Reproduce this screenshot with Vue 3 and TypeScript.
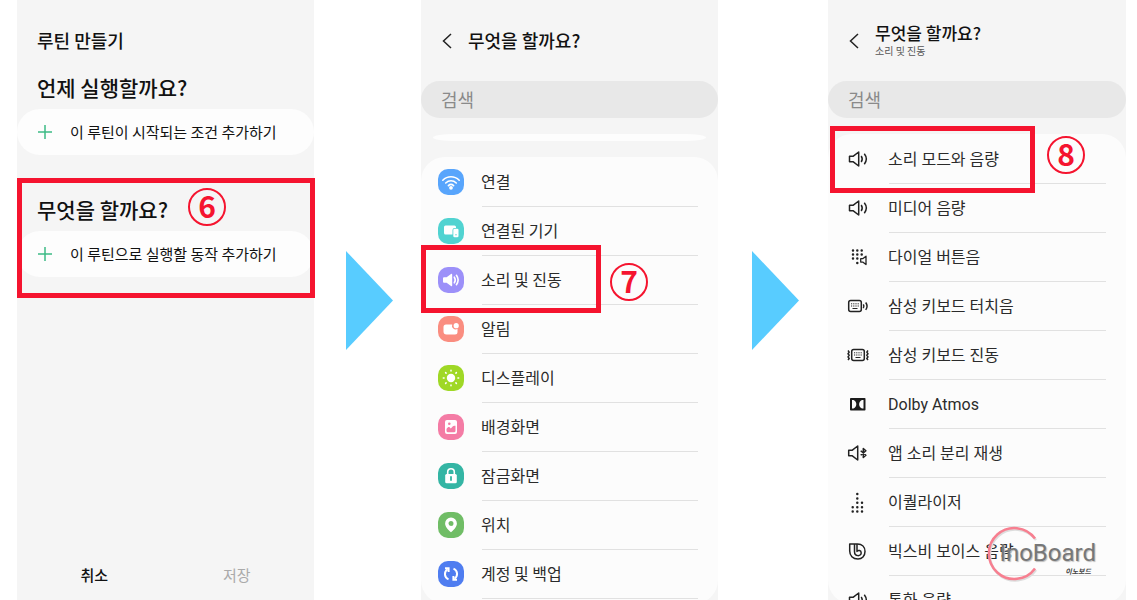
<script setup lang="ts">
interface Row {
  icon: string
  label: string
}

const categories: Row[] = [
  { icon: 'wifi', label: '연결' },
  { icon: 'devices', label: '연결된 기기' },
  { icon: 'sound', label: '소리 및 진동' },
  { icon: 'alert', label: '알림' },
  { icon: 'display', label: '디스플레이' },
  { icon: 'wallpaper', label: '배경화면' },
  { icon: 'lock', label: '잠금화면' },
  { icon: 'pin', label: '위치' },
  { icon: 'sync', label: '계정 및 백업' },
]

const soundActions: Row[] = [
  { icon: 'volume', label: '소리 모드와 음량' },
  { icon: 'volume', label: '미디어 음량' },
  { icon: 'dial', label: '다이얼 버튼음' },
  { icon: 'keysound', label: '삼성 키보드 터치음' },
  { icon: 'keyvibrate', label: '삼성 키보드 진동' },
  { icon: 'dolby', label: 'Dolby Atmos' },
  { icon: 'bluetooth', label: '앱 소리 분리 재생' },
  { icon: 'equalizer', label: '이퀄라이저' },
  { icon: 'bixby', label: '빅스비 보이스 음량' },
  { icon: 'volume', label: '통화 음량' },
]
</script>

<template>
  <main class="guide">
    <section class="phone">
      <h1 class="title">루틴 만들기</h1>
      <div class="group">
        <h2>언제 실행할까요?</h2>
        <button class="add" type="button">
          <svg viewBox="0 0 14 14" aria-hidden="true"><path d="M7 0v14M0 7h14" /></svg>
          <span class="label">이 루틴이 시작되는 조건 추가하기</span>
        </button>
      </div>
      <div class="group group-second">
        <h2>무엇을 할까요?</h2>
        <button class="add" type="button">
          <svg viewBox="0 0 14 14" aria-hidden="true"><path d="M7 0v14M0 7h14" /></svg>
          <span class="label">이 루틴으로 실행할 동작 추가하기</span>
        </button>
      </div>
      <footer class="actions">
        <button type="button">취소</button>
        <button type="button" class="muted">저장</button>
      </footer>
      <div class="frame frame-six"></div>
      <span class="step step-six">6</span>
    </section>

    <div class="arrow">
      <svg viewBox="0 0 47 99" aria-hidden="true"><path d="M0 0 47 49.500 0 99z" /></svg>
    </div>

    <section class="phone">
      <header class="bar">
        <button class="back" type="button" aria-label="뒤로">
          <svg viewBox="0 0 10 16" aria-hidden="true"><path d="M9 1 1.500 8 9 15" /></svg>
        </button>
        <h1 class="label">무엇을 할까요?</h1>
      </header>
      <input class="search" type="search" placeholder="검색" aria-label="검색" />
      <div class="sliver"></div>
      <ul class="list">
        <li v-for="row in categories" :key="row.label">
          <button class="row" type="button">
            <span class="badge" :class="row.icon">
              <svg viewBox="0 0 26 26" aria-hidden="true">
                <g v-if="row.icon === 'wifi'" class="line">
                  <path d="M4.800 11.200c4.700-4.600 11.700-4.600 16.400 0M7.700 14c3.100-3 7.500-3 10.600 0M10.400 16.600c1.600-1.500 3.600-1.500 5.200 0" />
                  <circle class="solid" cx="13" cy="18.800" r="1.100" />
                </g>
                <g v-else-if="row.icon === 'devices'">
                  <path d="M7.500 7.500h9a1.500 1.500 0 0 1 1.500 1.500v1h-1.500a2 2 0 0 0-2 2v4.500h-7A1.500 1.500 0 0 1 6 15V9a1.500 1.500 0 0 1 1.500-1.500z" />
                  <rect x="15.300" y="10.800" width="5.200" height="8.500" rx="1.300" />
                  <circle cx="18" cy="16.800" r=".7" fill="#51d3d1" />
                </g>
                <g v-else-if="row.icon === 'sound'">
                  <path d="M5 11.300q0-1 1-1h2.600L13 7q1.200-.7 1.200.7v10.600q0 1.400-1.200.7l-4.400-3.300H6q-1 0-1-1z" />
                  <path class="line" d="M16.300 10.200c1.200 1.700 1.200 3.900 0 5.600M18.400 8.300c2.100 2.900 2.100 6.500 0 9.400" />
                </g>
                <g v-else-if="row.icon === 'alert'">
                  <path d="M8 8.500h6.200a3.600 3.600 0 0 0 5.300 4.300v3.200a2.500 2.500 0 0 1-2.500 2.500H8.500A3 3 0 0 1 5.500 15.500V11A2.500 2.500 0 0 1 8 8.500z" />
                  <circle cx="18.200" cy="9.700" r="2.600" />
                </g>
                <g v-else-if="row.icon === 'display'">
                  <circle cx="13" cy="13" r="4.200" />
                  <path class="line dots" d="M13 5.300v.8M13 19.900v.8M5.300 13h.8M19.900 13h.8M7.600 7.600l.5.5M17.900 17.900l.5.5M7.600 18.400l.5-.5M17.900 8.100l.5-.5" />
                </g>
                <g v-else-if="row.icon === 'wallpaper'">
                  <rect x="7" y="6" width="12" height="14" rx="2" />
                  <path d="M8.500 15c2-3 3-2 4.300-.5 1.200-1 2.200-3.500 4.700-2.700v5q0 1.500-1.500 1.500h-6q-1.500 0-1.500-1.500z" fill="#f47ca5" />
                  <circle cx="11.300" cy="9.800" r="1.300" fill="#f47ca5" />
                </g>
                <g v-else-if="row.icon === 'lock'">
                  <path class="line" d="M9.700 12V9a3.300 3.300 0 0 1 6.600 0v3" />
                  <rect x="7.200" y="11" width="11.600" height="9.200" rx="1.500" />
                  <path d="M13 14v3" stroke="#34b5a4" stroke-width="1.800" stroke-linecap="round" />
                </g>
                <g v-else-if="row.icon === 'pin'">
                  <path fill-rule="evenodd" d="M13 5.500a5.900 5.900 0 0 0-5.900 5.900c0 4 4.600 7.400 5.900 8.900 1.300-1.500 5.900-4.900 5.900-8.900A5.900 5.900 0 0 0 13 5.500zm0 3.500a2.500 2.500 0 1 1 0 5 2.500 2.500 0 0 1 0-5z" />
                </g>
                <g v-else class="line thick">
                  <path d="M10.500 18.300C6.200 16.500 5.700 11 9.500 8.300M15.500 7.700c4.300 1.800 4.800 7.300 1 10" />
                  <path d="M7 7.300h3.600v3.600M19 18.700h-3.600v-3.600" />
                </g>
              </svg>
            </span>
            <span class="label">{{ row.label }}</span>
          </button>
        </li>
      </ul>
      <div class="frame frame-seven"></div>
      <span class="step step-seven">7</span>
    </section>

    <div class="arrow">
      <svg viewBox="0 0 47 99" aria-hidden="true"><path d="M0 0 47 49.500 0 99z" /></svg>
    </div>

    <section class="phone">
      <header class="bar">
        <button class="back" type="button" aria-label="뒤로">
          <svg viewBox="0 0 10 16" aria-hidden="true"><path d="M9 1 1.500 8 9 15" /></svg>
        </button>
        <div class="stacked">
          <h1>무엇을 할까요?</h1>
          <p>소리 및 진동</p>
        </div>
      </header>
      <input class="search" type="search" placeholder="검색" aria-label="검색" />
      <ul class="list">
        <li v-for="(row, i) in soundActions" :key="i">
          <button class="row" type="button">
            <svg class="glyph" viewBox="0 0 24 24" aria-hidden="true">
              <g v-if="row.icon === 'volume'">
                <path d="M3.500 9.300H7l5.700-4.300v14L7 14.700H3.500z" />
                <path d="M15.200 9c1.300 1.900 1.300 4.100 0 6M18.300 6.800c2.600 3.300 2.600 7.100 0 10.400" />
              </g>
              <g v-else-if="row.icon === 'dial'">
                <path class="dot" d="M7 5.500h0M11.300 5.500h0M15.700 5.500h0M7 9.500h0M11.300 9.500h0M15.700 9.500h0M7 13.500h0M11.300 13.500h0M11.300 18h0" />
                <path class="mid" d="M14.700 13.700h2l3.300-2.500v8.400l-3.300-2.500h-2z" />
              </g>
              <g v-else-if="row.icon === 'keysound'">
                <rect x="2.700" y="6.500" width="12.600" height="11" rx="2" />
                <path class="thin" d="M5 9.800h8M5 12h8" stroke-dasharray="1.200 1" />
                <path class="thin" d="M6.500 14.500h5" />
                <path d="M17.300 10.300c.8 1.200.8 2.700 0 3.900M19.700 8.500c1.800 2.400 1.800 5 0 7.400" />
              </g>
              <g v-else-if="row.icon === 'keyvibrate'">
                <rect x="5.700" y="6.500" width="12.600" height="11" rx="2" />
                <path class="thin" d="M8 9.800h8M8 12h8" stroke-dasharray="1.200 1" />
                <path class="thin" d="M9.500 14.500h5" />
                <path d="m2 7.500 1.200 1.600L2 10.700l1.200 1.600L2 13.900l1.200 1.600L2 17M22 7.500l-1.200 1.600 1.200 1.600-1.200 1.600 1.200 1.600-1.200 1.600L22 17" />
              </g>
              <g v-else-if="row.icon === 'dolby'" class="filled">
                <rect x="4" y="6" width="15.500" height="12.500" rx=".8" />
                <path class="cut" d="M6 8h1.500c3.800 1.500 3.800 7 0 8.500H6zM17.500 8H16c-3.800 1.500-3.800 7 0 8.500h1.500z" />
              </g>
              <g v-else-if="row.icon === 'bluetooth'">
                <path d="M2.700 9.300H6L11.700 5v14L6 14.700H2.700z" />
                <path d="m14.700 9.700 5.200 4.600-2.600 2.200v-9l2.600 2.200-5.200 4.600" />
              </g>
              <g v-else-if="row.icon === 'equalizer'">
                <path class="dot" d="M11.300 4h0M11.300 8.500h0M11.300 12.800h0M11.300 17.200h0M11.300 21.500h0M6.700 17.200h0M6.700 21.500h0M16 12.800h0M16 17.200h0M16 21.500h0" />
              </g>
              <g v-else>
                <path d="M3.700 5h7.800c4.500 0 7.500 3 7.500 7.500s-3 7.500-7 7.500c-5.300 0-8.300-3.500-8.300-8z" />
                <path d="M8.500 5v7.500c0 5.500 6.700 5 6.700 1.500 0-2.700-3-3.300-4.200-1.600V5" />
              </g>
            </svg>
            <span class="label"><span class="mixed">{{ row.label }}</span></span>
          </button>
        </li>
      </ul>
      <div class="frame frame-eight"></div>
      <span class="step step-eight">8</span>
      <div class="brand">
        <svg viewBox="0 0 58 58" aria-hidden="true">
          <path class="shade" d="M49 15A25.500 25.500 0 1 0 49 45" />
          <path class="ring" d="M48 13.500A25.500 25.500 0 1 0 48 43.500" />
        </svg>
        <span class="name">InoBoard</span>
        <span class="tag">이노보드</span>
      </div>
    </section>
  </main>
</template>

<style>
body {
  margin: 0;
  background: #fff;
}
</style>

<style scoped>
.guide {
  display: grid;
  grid-template-columns: 297fr 107px 297fr 110px 298fr;
  height: 100vh;
  padding: 0 11px 0 17px;
  box-sizing: border-box;
  overflow: hidden;
  color: #111;
  font-family: "Noto Sans CJK KR", sans-serif;
}
.phone {
  position: relative;
  display: flex;
  flex-direction: column;
  min-width: 0;
  min-height: 0;
  background: #f5f5f5;
}
h1,
h2,
p,
ul {
  margin: 0;
  padding: 0;
}
button {
  border: 0;
  padding: 0;
  background: none;
  color: inherit;
  font-family: inherit;
}
svg {
  fill: none;
  flex: none;
}
h1 {
  font-size: 18px;
  line-height: 26px;
  font-weight: 500;
}
h2 {
  padding-left: 20px;
  font-size: 21px;
  line-height: 30px;
  font-weight: 500;
}
.label {
  padding-bottom: 2px;
}
.title {
  margin-top: 27px;
  padding-left: 20px;
}
.group {
  margin-top: 19px;
}
.group-second {
  margin-top: 39px;
}
.add {
  display: flex;
  align-items: center;
  gap: 18px;
  width: 100%;
  height: 46px;
  margin-top: 7px;
  padding-left: 21px;
  border-radius: 23px;
  background: #fdfdfd;
  font-size: 15px;
  white-space: nowrap;
}
.add svg {
  width: 14px;
  height: 14px;
  stroke: #3cba85;
  stroke-width: 1.5;
}
.actions {
  display: flex;
  margin-top: auto;
  padding: 0 6px 12px;
}
.actions button {
  flex: 1;
  font-size: 15px;
  line-height: 26px;
  font-weight: 500;
}
.actions .muted {
  color: #aaa;
  font-weight: 400;
}
.arrow {
  display: flex;
  align-items: center;
  justify-content: center;
  padding-left: 4px;
}
.arrow svg {
  width: 47px;
  height: 99px;
  fill: #58ccff;
}
.bar {
  display: flex;
  align-items: center;
  gap: 16px;
  height: 81px;
  padding-left: 21px;
}
.back {
  display: flex;
}
.back svg {
  width: 10px;
  height: 16px;
  stroke: #222;
  stroke-width: 1.5;
}
.stacked {
  padding-bottom: 1px;
}
.stacked h1 {
  font-size: 17px;
  line-height: 22px;
}
.stacked p {
  color: #555;
  font-size: 10px;
  line-height: 14px;
}
.search {
  width: 100%;
  height: 37px;
  box-sizing: border-box;
  flex: none;
  border: 0;
  border-radius: 19px;
  padding: 0 20px 2px;
  background: #e8e8e8;
  color: #222;
  font-family: inherit;
  font-size: 18px;
  outline: none;
}
.search::placeholder {
  color: #8a8a8a;
  opacity: 1;
}
.sliver {
  flex: none;
  height: 7px;
  margin: 16px 12px 0;
  border-radius: 24px / 4px;
  background: #fdfdfd;
}
.list {
  flex: 1;
  min-height: 0;
  margin: 16px 0 -4px;
  overflow: hidden;
  border-radius: 24px;
  background: #fcfcfc;
  list-style: none;
}
.row {
  position: relative;
  display: flex;
  align-items: center;
  gap: 17px;
  width: 100%;
  height: 49px;
  padding-left: 17px;
  color: #2b2b2b;
  font-size: 16px;
  white-space: nowrap;
}
.row::after {
  content: "";
  position: absolute;
  right: 20px;
  bottom: -1px;
  left: 61px;
  height: 1px;
  background: #e1e1e1;
}
.mixed {
  font-family: Roboto, "Noto Sans CJK KR", sans-serif;
}
.badge {
  width: 26px;
  height: 26px;
  flex: none;
  border-radius: 10px;
}
.badge svg {
  display: block;
  width: 26px;
  height: 26px;
  fill: #fff;
}
.line {
  fill: none;
  stroke: #fff;
  stroke-width: 1.6;
  stroke-linecap: round;
}
.thick {
  stroke-width: 2;
  stroke-linecap: butt;
}
.dots {
  stroke-width: 1.5;
}
.solid {
  fill: #fff;
}
.wifi {
  background: #58a5fc;
}
.devices {
  background: #51d3d1;
}
.sound {
  background: #9c90f9;
}
.alert {
  background: #fa8d80;
}
.display {
  background: #9fd826;
}
.wallpaper {
  background: #f47ca5;
}
.lock {
  background: #34b5a4;
}
.pin {
  background: #70bd66;
}
.sync {
  background: #4f7df0;
}
.glyph {
  width: 24px;
  height: 24px;
  margin: 0 1px;
  stroke: #222;
  stroke-width: 1.5;
  stroke-linejoin: round;
}
.thin {
  stroke-width: 1;
}
.mid {
  stroke-width: 1.3;
}
.dot {
  stroke-width: 2.5;
  stroke-linecap: round;
}
.filled {
  fill: #1c1c1c;
  stroke: none;
}
.cut {
  fill: #fcfcfc;
}
.frame {
  position: absolute;
  box-sizing: border-box;
  border: 5px solid #f5142f;
  pointer-events: none;
}
.frame-six {
  top: 178px;
  right: -1px;
  left: 0;
  height: 120px;
}
.frame-seven {
  top: 245px;
  left: 0;
  width: 180px;
  height: 68px;
}
.frame-eight {
  top: 126px;
  left: 2px;
  width: 205px;
  height: 67px;
}
.step {
  position: absolute;
  width: 38px;
  height: 38px;
  box-sizing: border-box;
  border: 2px solid #f5142f;
  border-radius: 50%;
  color: #f5142f;
  font-family: "Noto Sans CJK KR", sans-serif;
  font-size: 30px;
  line-height: 30px;
  font-weight: 700;
  text-align: center;
}
.step-six {
  top: 188px;
  left: 171px;
}
.step-seven {
  top: 263px;
  left: 189px;
}
.step-eight {
  top: 136px;
  left: 219px;
}
.brand {
  position: absolute;
  right: 30px;
  bottom: 17px;
  width: 109px;
  height: 58px;
}
.brand svg {
  width: 58px;
  height: 58px;
  stroke-width: 2.5;
}
.ring {
  stroke: #f77f90;
}
.shade {
  stroke: #ddd;
}
.name {
  position: absolute;
  top: 12px;
  right: 0;
  color: #777;
  font-family: Roboto, sans-serif;
  font-size: 24px;
  line-height: 32px;
  text-shadow: 1px 1px 1px #bbb;
}
.tag {
  position: absolute;
  right: 5px;
  bottom: 7px;
  color: #444;
  font-size: 7px;
  line-height: 10px;
  font-style: italic;
  font-weight: 700;
}
</style>
